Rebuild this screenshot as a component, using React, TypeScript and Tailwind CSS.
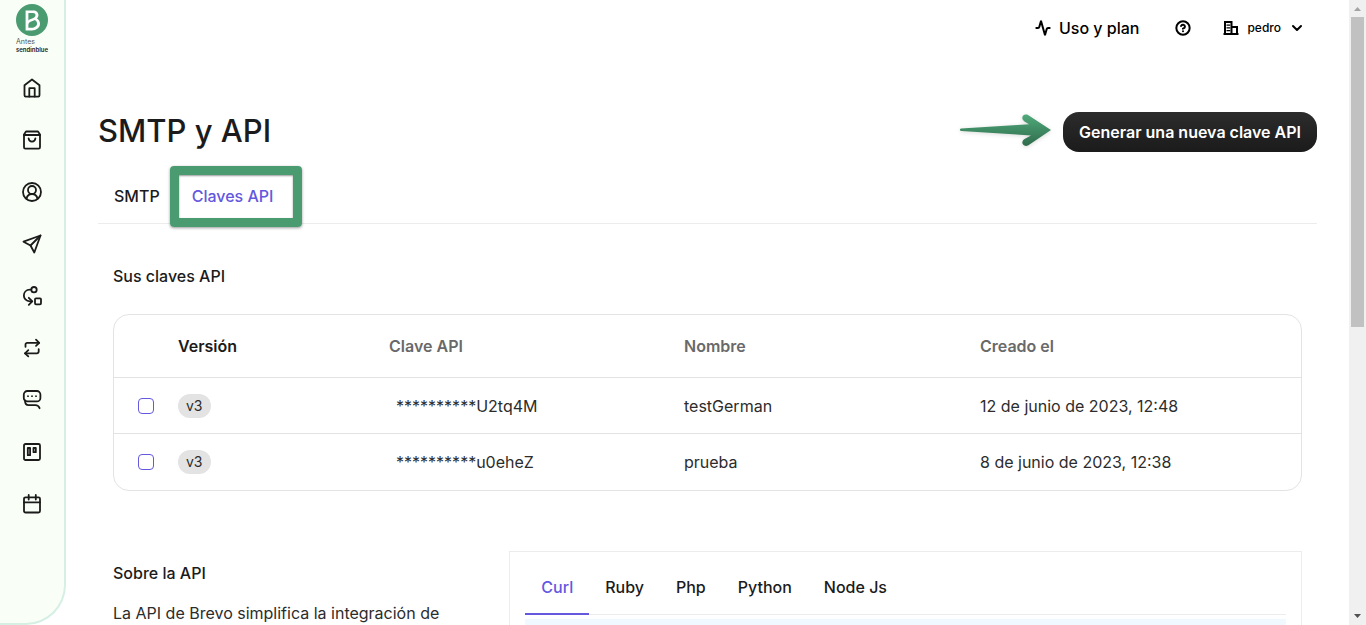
import { Activity, ChevronDown, CircleHelp } from "lucide-react";
import { useState, type ReactNode } from "react";
import { SiBrevo } from "react-icons/si";

const apiKeys = [
  { id: 1, version: "v3", key: "**********U2tq4M", name: "testGerman", created: "12 de junio de 2023, 12:48" },
  { id: 2, version: "v3", key: "**********u0eheZ", name: "prueba", created: "8 de junio de 2023, 12:38" }
];

const languages = ["Curl", "Ruby", "Php", "Python", "Node Js"];

const navItems: { label: string; icon: ReactNode }[] = [
  { label: "Inicio", icon: <><path d="M4.500 9.300 12 3.500l7.500 5.800v10a1.300 1.300 0 0 1-1.300 1.300H5.800a1.300 1.300 0 0 1-1.300-1.300z" /><path d="M9.300 20.500v-8.300h5.400v8.300" /></> },
  { label: "Comercio", icon: <><path d="M6 3.500h12l2 3v12.800a1.300 1.300 0 0 1-1.300 1.300H5.300A1.300 1.300 0 0 1 4 19.300V6.500z" /><path d="M4 7h16M8.600 10.300c.3 4.400 6.500 4.400 6.800 0" /></> },
  { label: "Contactos", icon: <><circle cx="12" cy="12" r="9" /><circle cx="12" cy="10" r="4" /><path d="M6.500 18.800c.6-3 2.800-4.800 5.500-4.800s4.900 1.800 5.500 4.800" /></> },
  { label: "Campañas", icon: <><path d="M20.500 3.500 3.500 9.700l7 3.800 3.800 7z" /><path d="m20.500 3.500-10 10" /></> },
  { label: "Automatización", icon: <><circle cx="14" cy="5.700" r="2.700" /><path d="M11.300 5.700H10C1.800 5.700 1.800 17.300 10 17.300h2" /><path d="m8.800 13.800 3.500 3.500-3.500 3.500" /><rect x="15" y="14.300" width="6" height="6" rx="1" /></> },
  { label: "Transaccional", icon: <><path d="M5.500 10.800V8.500a1.700 1.700 0 0 1 1.700-1.700H19" /><path d="m16 3.700 3.200 3.100L16 9.900M8.300 14.200 5 17.300l3.300 3.100" /><path d="M5 17.300h12a1.700 1.700 0 0 0 1.700-1.700v-2.400" /></> },
  { label: "Conversaciones", icon: <><rect x="3.800" y="3" width="16.600" height="10.400" rx="3.500" /><path d="M5 12.500c0 3 .8 4.700 3.600 4.700h6.800c2.300 0 3.300.8 4.200 3" /><path d="M8 8.200h.01M12 8.200h.01M16 8.200h.01" /></> },
  { label: "Ventas", icon: <><rect x="4" y="4" width="16" height="16" rx="1.500" /><rect x="7.800" y="8" width="2.300" height="7.200" /><rect x="13.500" y="8" width="2.300" height="4.200" /></> },
  { label: "Reuniones", icon: <><rect x="4" y="5.300" width="16" height="15.200" rx="1.500" /><path d="M4 10.300h16M8.700 3v4.500M15.800 3v4.500" /></> }
];

function Sidebar() {
  return (
    <aside className="flex w-[66px] shrink-0 flex-col items-center rounded-br-[40px] border-r-2 border-b-2 border-[#d6efe5] bg-[#f9fff6] pt-1">
      <a href="#inicio" className="flex flex-col text-[#1b1b1b]">
        <span className="rounded-full bg-white text-[#4a9b70]"><SiBrevo className="h-8 w-8" /></span>
        <span className="mt-[2px] text-[7px] leading-[8px] text-[#555]">Antes</span>
        <span className="text-[6px] leading-[8px] font-semibold">sendinblue</span>
      </a>
      <nav className="mt-[22px] flex flex-col gap-7">
        {navItems.map((item) => (
          <a key={item.label} href="#" aria-label={item.label} className="text-[#1b1b1b]">
            <svg viewBox="0 0 24 24" className="h-6 w-6" fill="none" stroke="currentColor" strokeWidth="1.800" strokeLinecap="round" strokeLinejoin="round">{item.icon}</svg>
          </a>
        ))}
      </nav>
    </aside>
  );
}

function TopBar() {
  return (
    <header className="flex h-14 items-center justify-end pr-3 text-black">
      <a href="#plan" className="flex items-center gap-2 font-medium"><Activity className="h-4 w-4" strokeWidth={3} />Uso y plan</a>
      <button type="button" aria-label="Ayuda" className="ml-9"><CircleHelp className="h-4 w-4" strokeWidth={3} /></button>
      <button type="button" className="ml-8 flex items-center gap-2 text-xs font-medium">
        <svg viewBox="0 0 16 16" className="h-4 w-4" fill="none" stroke="currentColor" strokeWidth="2">
          <path d="M2 14V2h6.500v12M9 7h5v7M0.500 14h15" />
          <path d="M3.500 5.200h3.800M3.500 7.900h3.800M3.500 10.600h3.800" strokeWidth="1.300" />
        </svg>
        pedro
        <ChevronDown className="h-4 w-4" strokeWidth={3} />
      </button>
    </header>
  );
}

function ArrowMark() {
  return (
    <svg viewBox="0 2 94 36" className="h-9 w-[94px] drop-shadow-sm" aria-hidden="true">
      <defs>
        <linearGradient id="arrow" x1="0" y1="0" x2="0" y2="1">
          <stop offset="0" stopColor="#50aa7b" />
          <stop offset="1" stopColor="#2f6b4c" />
        </linearGradient>
      </defs>
      <path fill="url(#arrow)" d="M2 16.500 70 12.300 65.500 9.500C61 6 64 1 69 3L92 18 69 33.500C64 35.500 61 30 65.500 27L72 23.500 2 19C.5 18.500.5 17 2 16.500z" />
    </svg>
  );
}

function KeysTable() {
  return (
    <div className="mt-[26px] overflow-hidden rounded-2xl border border-[#e3e3e3]">
      <table className="w-full table-fixed border-separate border-spacing-0 text-left">
        <thead>
          <tr className="h-[63px] text-[#696969] [&>th]:border-b [&>th]:border-[#e3e3e3]">
            <th className="w-16" aria-label="Seleccionar" />
            <th className="w-[211px] font-semibold text-[#1b1b1b]">Versión</th>
            <th className="w-[295px] font-semibold">Clave API</th>
            <th className="w-[296px] font-semibold">Nombre</th>
            <th className="font-semibold">Creado el</th>
          </tr>
        </thead>
        <tbody className="text-[#2c2c2c]">
          {apiKeys.map((row) => (
            <tr key={row.id} className="h-14 [&>td]:border-b [&>td]:border-[#e3e3e3] last:[&>td]:border-b-0">
              <td className="pl-6"><input type="checkbox" aria-label={row.name} className="block h-4 w-4 appearance-none rounded border border-[#6358de] bg-white checked:bg-[#6358de]" /></td>
              <td><span className="block w-fit rounded-full bg-[#e3e3e3] px-2 text-sm leading-6">{row.version}</span></td>
              <td className="pl-[7px]">{row.key}</td>
              <td>{row.name}</td>
              <td>{row.created}</td>
            </tr>
          ))}
        </tbody>
      </table>
    </div>
  );
}

function CodePanel() {
  const [language, setLanguage] = useState("Curl");

  return (
    <div className="w-2/3 border border-[#ececec] px-[15px] pt-[7px]">
      <div className="flex border-b border-[#ececec]">
        {languages.map((item) => (
          <button key={item} type="button" onClick={() => setLanguage(item)} className={`-mb-px border-b-2 px-4 pt-4 pb-[14px] font-medium leading-6 ${language === item ? "border-[#6358de] text-[#6358de]" : "border-transparent"}`}>{item}</button>
        ))}
      </div>
      <div className="mt-1 h-40 bg-[#f0f9ff]" />
    </div>
  );
}

function ScrollRail() {
  return (
    <div className="flex w-[17px] shrink-0 flex-col items-center bg-[#f0f0f0]" aria-hidden="true">
      <svg viewBox="0 0 17 17" className="h-[17px] w-[17px]"><path d="M5 11h7L8.500 7z" fill="#a3a3a3" /></svg>
      <div className="h-[310px] w-[13px] bg-[#c1c1c1]" />
      <svg viewBox="0 0 17 17" className="mt-auto h-[17px] w-[17px]"><path d="M5 6h7L8.500 10z" fill="#505050" /></svg>
    </div>
  );
}

export default function App() {
  const [tab, setTab] = useState("keys");

  return (
    <div className="flex h-screen overflow-hidden bg-white font-['Inter',sans-serif] text-base text-[#1b1b1b]">
      <Sidebar />
      <main className="min-w-0 flex-1 px-8">
        <TopBar />
        <div className="mt-14 flex items-start justify-between">
          <h1 className="text-[31px] leading-[38px] font-medium">SMTP y API</h1>
          <div className="flex items-center gap-[10px]">
            <ArrowMark />
            <button type="button" className="h-10 rounded-2xl bg-linear-to-b from-[#2c2c2c] to-[#1b1b1b] px-4 font-semibold text-white">Generar una nueva clave API</button>
          </div>
        </div>

        <div className="mt-4 flex border-b border-[#ececec]">
          <button type="button" onClick={() => setTab("smtp")} className={`px-4 pt-4 pb-[15px] font-medium leading-6 ${tab === "smtp" ? "text-[#6358de]" : ""}`}>SMTP</button>
          <button type="button" onClick={() => setTab("keys")} className={`relative px-4 pt-4 pb-[15px] font-medium leading-6 ${tab === "keys" ? "text-[#6358de]" : ""}`}>
            Claves API
            <span className="absolute -top-[2px] -right-[13px] -bottom-1 -left-[6px] rounded border-9 border-[#4a9b70] shadow-[0_1px_3px_rgba(0,0,0,0.4),inset_0_1px_2px_rgba(0,0,0,0.4)]" />
          </button>
        </div>

        <div className="px-[15px] pt-10">
          <h2 className="font-medium leading-6">Sus claves API</h2>
          <KeysTable />
          <div className="mt-[60px] flex">
            <div className="w-1/3 pt-[10px]">
              <h2 className="font-medium leading-6">Sobre la API</h2>
              <p className="mt-4 text-[#2c2c2c]">La API de Brevo simplifica la integración de</p>
            </div>
            <CodePanel />
          </div>
        </div>
      </main>
      <ScrollRail />
    </div>
  );
}
